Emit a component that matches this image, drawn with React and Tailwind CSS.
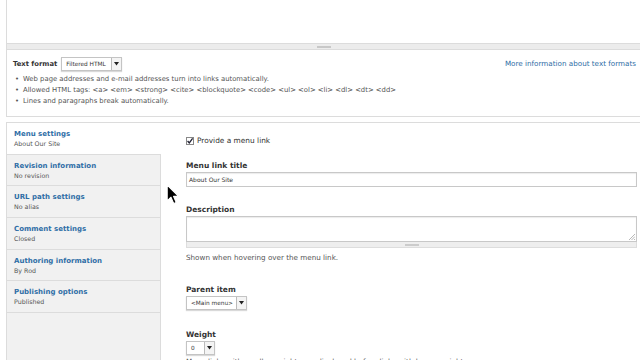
import React from "react";

function Arrow() {
  return (
    <span className="flex h-full w-[10px] items-center justify-center border-l border-[#bbb] bg-[#f4f4f4]">
      <svg width="5" height="4" viewBox="0 0 5 4"><path d="M0 0 L5 0 L2.5 3.5 Z" fill="#222" /></svg>
    </span>
  );
}

function Select({ label, w }) {
  return (
    <div className={`flex h-[14px] items-stretch border border-[#c4c4c4] bg-white shadow-[0_1px_1px_rgba(0,0,0,0.15)] ${w}`}>
      <span className="flex flex-1 items-center pl-[4px] text-[5.8px] text-[#333]">{label}</span>
      <Arrow />
    </div>
  );
}

function Grip() {
  return (
    <div className="flex h-[6px] items-center justify-center border-x border-b border-[#ddd] bg-[#eee]">
      <div className="h-[2px] w-[14px] border-y border-[#ccc]" />
    </div>
  );
}

const tabs = [
  ["Menu settings", "About Our Site"],
  ["Revision information", "No revision"],
  ["URL path settings", "No alias"],
  ["Comment settings", "Closed"],
  ["Authoring information", "By Rod"],
  ["Publishing options", "Published"],
];

export default function App() {
  return (
    <div className="relative h-[360px] w-[640px] overflow-hidden bg-white font-['DejaVu_Sans',sans-serif] text-[#333]">
      {/* text area + format */}
      <div className="ml-[6px] border-b border-l border-[#dcdcdc]">
        <div className="h-[43px] bg-white" />
        <div className="flex h-[7px] items-center justify-center border-y border-[#dcdcdc] bg-[#ececec]">
          <div className="h-[2px] w-[14px] border-y border-[#c8c8c8]" />
        </div>
        <div className="h-[66px] pl-[6px] pr-[4px] pt-[7px]">
          <div className="flex items-center">
            <span className="text-[6.8px] font-bold text-[#333]">Text format</span>
            <div className="ml-[4px]">
              <Select label="Filtered HTML" w="w-[61px]" />
            </div>
            <span className="ml-auto text-[7.2px] text-[#2f6ea6]">More information about text formats</span>
          </div>
          <ul className="mt-[3px] text-[6.85px] leading-[11px] text-[#555]">
            <li className="flex"><span className="w-[10px] pl-[2px]">•</span>Web page addresses and e-mail addresses turn into links automatically.</li>
            <li className="flex"><span className="w-[10px] pl-[2px]">•</span>Allowed HTML tags: &lt;a&gt; &lt;em&gt; &lt;strong&gt; &lt;cite&gt; &lt;blockquote&gt; &lt;code&gt; &lt;ul&gt; &lt;ol&gt; &lt;li&gt; &lt;dl&gt; &lt;dt&gt; &lt;dd&gt;</li>
            <li className="flex"><span className="w-[10px] pl-[2px]">•</span>Lines and paragraphs break automatically.</li>
          </ul>
        </div>
      </div>

      {/* vertical tabs */}
      <div className="ml-[6px] mt-[5px] flex h-[240px] border-l border-t border-[#dcdcdc]">
        <div className="w-[154px] border-r border-[#dcdcdc] bg-[#f1f1f1]">
          {tabs.map(([t, s], i) => (
            <div
              key={t}
              className={`h-[31.7px] border-b border-[#dcdcdc] pl-[7px] pt-[7px] ${i === 0 ? "-mr-px bg-white" : ""}`}
            >
              <div className="text-[7px] font-bold leading-[9px] text-[#2f6ea6]">{t}</div>
              <div className="text-[6.3px] leading-[10px] text-[#555]">{s}</div>
            </div>
          ))}
        </div>
        <div className="flex-1 pl-[25px] pr-[3px] pt-[12px]">
          <div className="flex items-center">
            <svg width="8" height="8" viewBox="0 0 8 8">
              <rect x="0.5" y="0.5" width="7" height="7" fill="#fff" stroke="#888" />
              <path d="M1.6 4 L3.3 6 L6.6 1.4" fill="none" stroke="#223" strokeWidth="1.3" />
            </svg>
            <span className="ml-[3px] text-[7.4px]">Provide a menu link</span>
          </div>
          <div className="mt-[15px] text-[7.5px] font-bold leading-[10px]">Menu link title</div>
          <div className="mt-[1px] flex h-[15px] items-center border border-[#c8c8c8] pl-[2px] text-[6px] shadow-[inset_0_1px_1px_rgba(0,0,0,0.08)]">About Our Site</div>
          <div className="mt-[18px] text-[7.5px] font-bold leading-[10px]">Description</div>
          <div className="relative mt-[1px] h-[26px] border border-[#c8c8c8] shadow-[inset_0_1px_1px_rgba(0,0,0,0.08)]">
            <svg className="absolute bottom-[1px] right-[1px]" width="6" height="6" viewBox="0 0 6 6">
              <path d="M6 0 L0 6 M6 2.5 L2.5 6 M6 5 L5 6" stroke="#999" strokeWidth="0.7" />
            </svg>
          </div>
          <Grip />
          <div className="mt-[5px] text-[7.2px] leading-[9px] text-[#555]">Shown when hovering over the menu link.</div>
          <div className="mt-[23px] text-[7.5px] font-bold leading-[10px]">Parent item</div>
          <div className="mt-[1px]">
            <Select label="<Main menu>" w="w-[61px]" />
          </div>
          <div className="mt-[20px] text-[7.5px] font-bold leading-[10px]">Weight</div>
          <div className="mt-[1px]">
            <Select label="0" w="w-[29px]" />
          </div>
          <div className="mt-[2px] text-[7.2px] leading-[9px] text-[#555]">Menu links with smaller weights are displayed before links with larger weights.</div>
        </div>
      </div>

      {/* mouse cursor */}
      <svg className="absolute left-[166px] top-[184px]" width="15" height="22" viewBox="0 0 14 21">
        <path d="M1 1 L1 16 L4.6 12.6 L7.2 18.6 L9.6 17.6 L7 11.8 L11.8 11.8 Z" fill="#000" stroke="#fff" strokeWidth="1" strokeLinejoin="round" />
      </svg>
    </div>
  );
}
